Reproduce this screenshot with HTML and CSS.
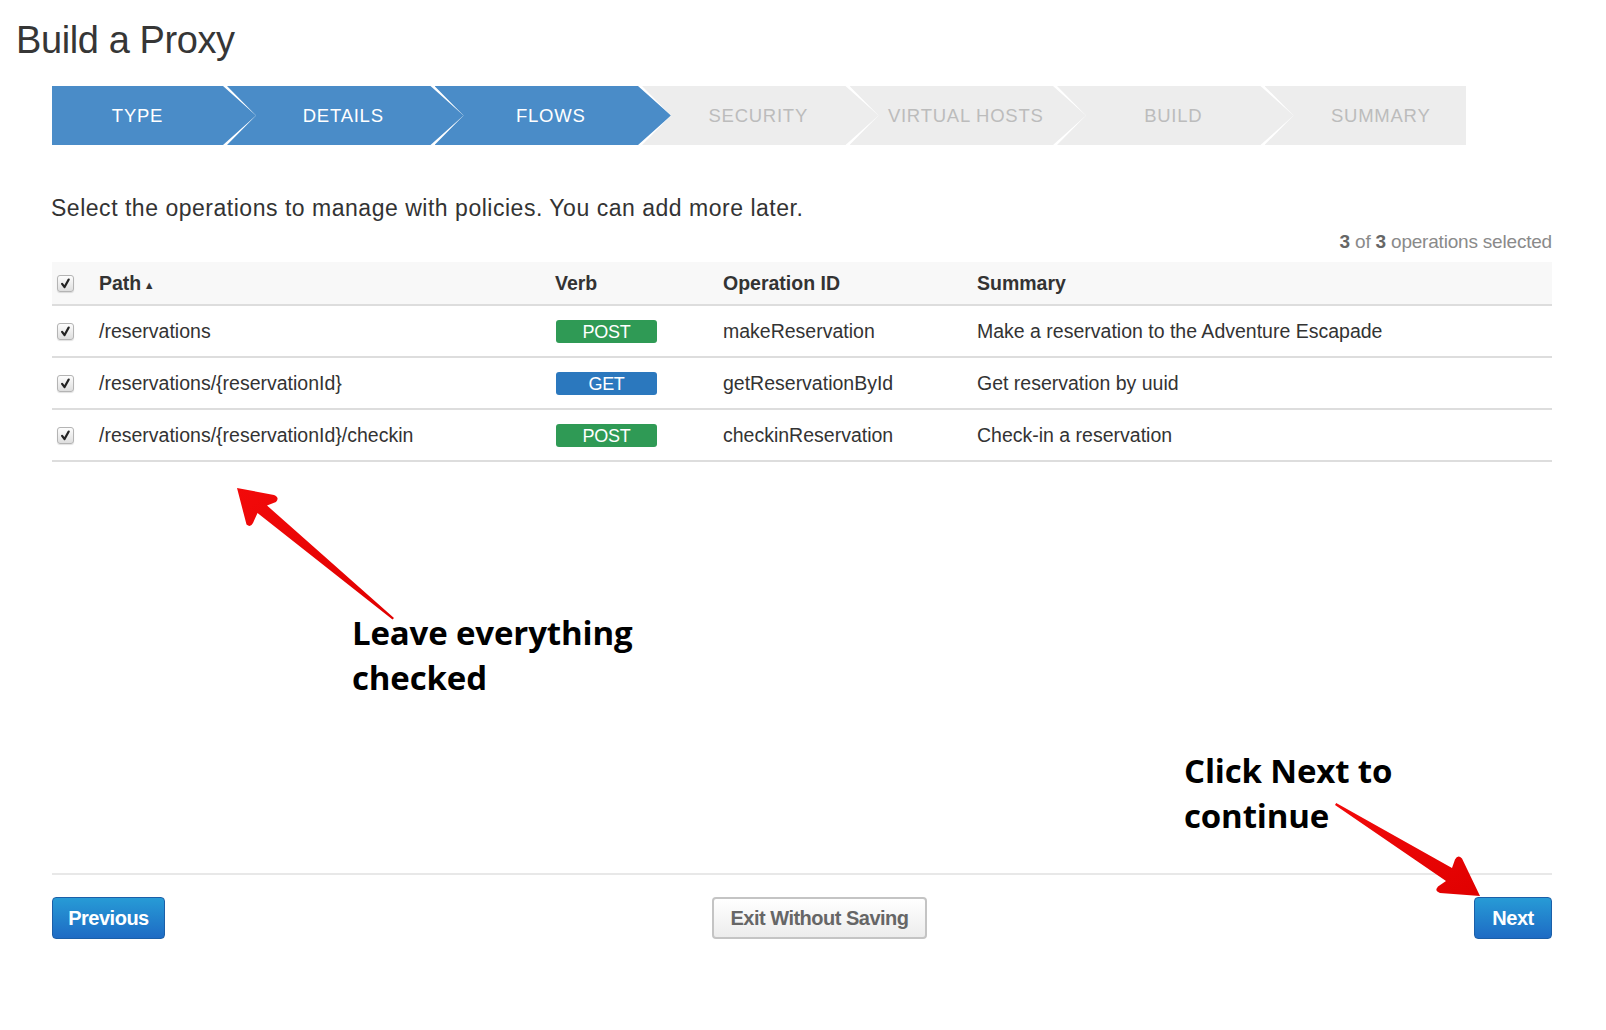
FILE: index.html
```html
<!DOCTYPE html>
<html>
<head>
<meta charset="utf-8">
<title>Build a Proxy</title>
<link rel="stylesheet" href="styles.css">
</head>
<body>
<div class="page">
  <h1 class="title">Build a Proxy</h1>

  <div class="wizard">
    <div class="step first done"><span>TYPE</span></div>
    <div class="step done"><span>DETAILS</span></div>
    <div class="step done"><span>FLOWS</span></div>
    <div class="step"><span>SECURITY</span></div>
    <div class="step"><span>VIRTUAL HOSTS</span></div>
    <div class="step"><span>BUILD</span></div>
    <div class="step"><span>SUMMARY</span></div>
  </div>

  <p class="intro">Select the operations to manage with policies. You can add more later.</p>
  <div class="count"><b>3</b> of <b>3</b> operations selected</div>

  <table class="ops">
    <thead>
      <tr>
        <th class="c-check"><span class="cb"><svg viewBox="0 0 16 16"><path d="M4.4 8.4 L7 11.8 L11.4 3.8" /></svg></span></th>
        <th class="c-path">Path <span class="sort">▲</span></th>
        <th class="c-verb">Verb</th>
        <th class="c-op">Operation ID</th>
        <th class="c-sum">Summary</th>
      </tr>
    </thead>
    <tbody>
      <tr>
        <td class="c-check"><span class="cb"><svg viewBox="0 0 16 16"><path d="M4.4 8.4 L7 11.8 L11.4 3.8" /></svg></span></td>
        <td class="c-path">/reservations</td>
        <td class="c-verb"><span class="verb post">POST</span></td>
        <td class="c-op">makeReservation</td>
        <td class="c-sum">Make a reservation to the Adventure Escapade</td>
      </tr>
      <tr>
        <td class="c-check"><span class="cb"><svg viewBox="0 0 16 16"><path d="M4.4 8.4 L7 11.8 L11.4 3.8" /></svg></span></td>
        <td class="c-path">/reservations/{reservationId}</td>
        <td class="c-verb"><span class="verb get">GET</span></td>
        <td class="c-op">getReservationById</td>
        <td class="c-sum">Get reservation by uuid</td>
      </tr>
      <tr>
        <td class="c-check"><span class="cb"><svg viewBox="0 0 16 16"><path d="M4.4 8.4 L7 11.8 L11.4 3.8" /></svg></span></td>
        <td class="c-path">/reservations/{reservationId}/checkin</td>
        <td class="c-verb"><span class="verb post">POST</span></td>
        <td class="c-op">checkinReservation</td>
        <td class="c-sum">Check-in a reservation</td>
      </tr>
    </tbody>
  </table>

  <div class="footer">
    <button class="btn btn-primary btn-prev">Previous</button>
    <button class="btn btn-default">Exit Without Saving</button>
    <button class="btn btn-primary btn-next">Next</button>
  </div>

  <div class="note note-left">Leave everything<br>checked</div>
  <div class="note note-right">Click Next to<br>continue</div>

  <svg class="arrows" width="1606" height="1030" viewBox="0 0 1606 1030">
    <defs>
      <linearGradient id="ag" x1="0" y1="0" x2="1" y2="1">
        <stop offset="0" stop-color="#f20a0a"/>
        <stop offset="1" stop-color="#e00000"/>
      </linearGradient>
    </defs>
    <!-- left arrow: tail (394,618) to tip (237,488) -->
    <path fill="url(#ag)" d="M394 618 L392.5 619.6 L257.5 513 L253 523 Q250.5 528 246.5 524.5 L237 488 L274 495 Q280 497.5 276 502 L267 505.5 Z"/>
    <!-- right arrow: tail (1335,805) to tip (1480,896) -->
    <path fill="url(#ag)" d="M1335 805 L1336.2 803 L1452 868 L1455 859.5 Q1458 854 1462 858.5 L1480 896 L1440 893 Q1434 891 1438 886.5 L1446 881 Z"/>
  </svg>
</div>
</body>
</html>
```

FILE: styles.css
```css
html, body {
  margin: 0;
  padding: 0;
  background: #ffffff;
}

body {
  font-family: "Liberation Sans", Arial, Helvetica, sans-serif;
  color: #333333;
}

.page {
  position: relative;
  width: 1606px;
  height: 1030px;
  padding: 0 54px 0 52px;
  box-sizing: border-box;
}

.title {
  margin: 0 0 0 -36px;
  padding-top: 20px;
  font-size: 38px;
  line-height: 41px;
  font-weight: normal;
  color: #363636;
  letter-spacing: -0.4px;
}

/* Wizard */
.wizard {
  display: flex;
  margin-top: 25px;
  width: 1414px;
  height: 59px;
  overflow: hidden;
}

.step {
  flex: 0 0 auto;
  width: 236.5px;
  height: 59px;
  margin-left: -29px;
  padding: 0 33px 0 29px;
  box-sizing: border-box;
  background: #ededed;
  color: #bcbcbc;
  display: flex;
  align-items: center;
  justify-content: center;
  font-size: 18.5px;
  letter-spacing: 0.75px;
  clip-path: polygon(0 0, calc(100% - 33px) 0, 100% 50%, calc(100% - 33px) 100%, 0 100%, 29px 50%);
}

.step.first {
  width: 204px;
  margin-left: 0;
  padding: 0 33px 0 0;
  clip-path: polygon(0 0, calc(100% - 33px) 0, 100% 50%, calc(100% - 33px) 100%, 0 100%);
}

.step.done {
  background: #4a8cc8;
  color: #ffffff;
}

/* Intro */
.intro {
  margin: 50px 0 0 -1px;
  font-size: 23px;
  letter-spacing: 0.52px;
  line-height: 27px;
  color: #333333;
}

.count {
  margin-top: 9px;
  text-align: right;
  font-size: 19px;
  letter-spacing: -0.2px;
  line-height: 22px;
  color: #8a8a8a;
}

.count b {
  color: #666666;
  font-weight: bold;
}

/* Table */
.ops {
  width: 100%;
  margin-top: 9px;
  border-collapse: collapse;
  font-size: 19.5px;
}

.ops th {
  background: #f8f8f8;
  height: 42px;
  padding: 0;
  text-align: left;
  font-weight: bold;
  color: #333333;
  border-bottom: 2px solid #dddddd;
  vertical-align: middle;
}

.ops td {
  height: 50px;
  padding: 0;
  border-bottom: 2px solid #dddddd;
  vertical-align: middle;
  color: #333333;
}

.c-check { width: 47px; padding-left: 5px !important; box-sizing: border-box; }
.c-path { width: 456px; }
.c-verb { width: 168px; }
.c-op { width: 254px; }

.sort {
  font-size: 11px;
  position: relative;
  top: -1px;
  margin-left: -3px;
}

.cb {
  display: inline-block;
  width: 17px;
  height: 17px;
  border: 1px solid #b4b4b4;
  border-radius: 3px;
  background: linear-gradient(#fdfdfd, #dedede);
  box-sizing: border-box;
  vertical-align: middle;
  position: relative;
  top: -1px;
  box-shadow: 0 1px 1px rgba(0, 0, 0, 0.12);
}

.cb svg {
  display: block;
  width: 15px;
  height: 15px;
}

.cb path {
  fill: none;
  stroke: #222222;
  stroke-width: 2.4;
  stroke-linecap: round;
  stroke-linejoin: round;
}

.verb {
  display: inline-block;
  width: 101px;
  height: 23px;
  line-height: 24px;
  border-radius: 3px;
  text-align: center;
  color: #ffffff;
  font-size: 18px;
  letter-spacing: -0.3px;
  vertical-align: middle;
  margin-left: 1px;
}

.verb.post { background: #2f9a55; }
.verb.get { background: #2b78be; }

/* Footer */
.footer {
  margin-top: 411px;
  border-top: 2px solid #e8e8e8;
  padding-top: 22px;
  display: flex;
  justify-content: space-between;
  align-items: center;
}

.btn {
  height: 42px;
  padding: 0;
  border-radius: 4px;
  font-family: "Liberation Sans", Arial, Helvetica, sans-serif;
  font-size: 20px;
  font-weight: bold;
  letter-spacing: -0.5px;
  cursor: pointer;
  text-align: center;
}

.btn-primary {
  color: #ffffff;
  border: 1px solid #1b5fa8;
  background: linear-gradient(#279bd6, #1e6bc4);
}

.btn-prev { width: 113px; }
.btn-next { width: 78px; }

.btn-default {
  color: #666666;
  border: 2px solid #c4c4c4;
  background: linear-gradient(#ffffff, #ececec);
  width: 215px;
  margin-left: 0;
}

/* Annotations laid over the page */
.note {
  position: absolute;
  font-family: "Open Sans", "Noto Sans", sans-serif;
  font-weight: bold;
  font-size: 33px;
  letter-spacing: -0.15px;
  line-height: 45px;
  color: #000000;
}

.note-left {
  left: 352px;
  top: 610px;
}

.note-right {
  left: 1184px;
  top: 748px;
}

.arrows {
  position: absolute;
  left: 0;
  top: 0;
  pointer-events: none;
}
```
